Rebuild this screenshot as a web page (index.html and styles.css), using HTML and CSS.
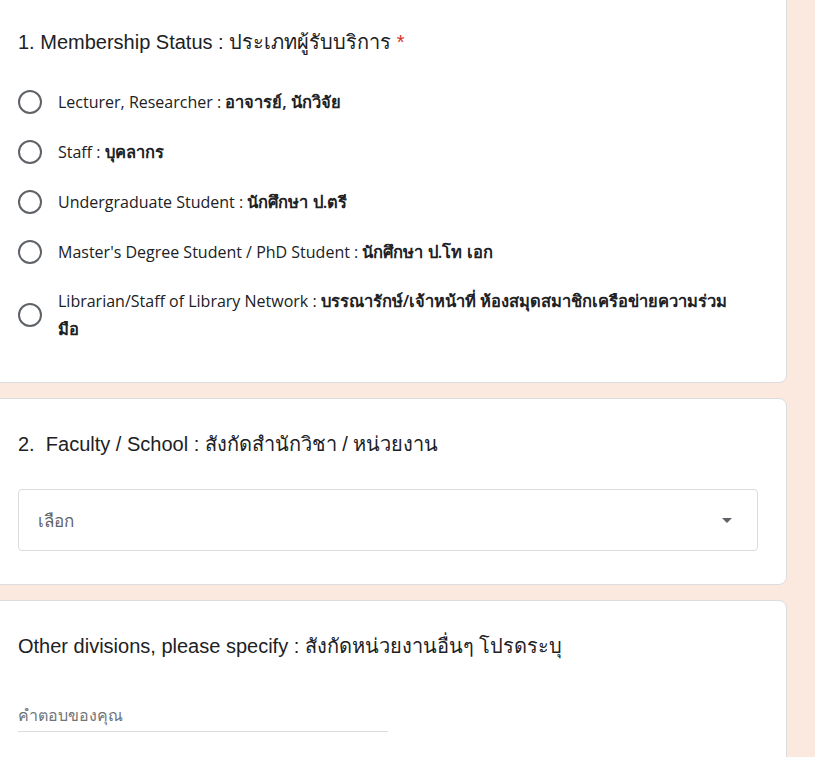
FILE: index.html
```html
<!DOCTYPE html>
<html>

<head>
  <title>แบบฟอร์มผู้รับบริการ</title>
  <meta name="viewport" content="width=device-width,initial-scale=1">
  <link rel="stylesheet" href="styles.css">
</head>

<body>
  <main class="form">
    <section class="card card--first">
      <h2 class="question">1. Membership Status : ประเภทผู้รับบริการ <span class="required">*</span></h2>
      <div class="options">
        <label class="option"><span class="radio"></span><span class="option__text">Lecturer, Researcher : <b>อาจารย์, นักวิจัย</b></span></label>
        <label class="option"><span class="radio"></span><span class="option__text">Staff : <b>บุคลากร</b></span></label>
        <label class="option"><span class="radio"></span><span class="option__text">Undergraduate Student : <b>นักศึกษา ป.ตรี</b></span></label>
        <label class="option"><span class="radio"></span><span class="option__text">Master's Degree Student / PhD Student : <b>นักศึกษา ป.โท เอก</b></span></label>
        <label class="option option--long"><span class="radio"></span><span class="option__text">Librarian/Staff of Library Network : <b>บรรณารักษ์/เจ้าหน้าที่ ห้องสมุดสมาชิกเครือข่ายความร่วม มือ</b></span></label>
      </div>
    </section>

    <section class="card">
      <h2 class="question">2.&nbsp; Faculty / School : สังกัดสำนักวิชา / หน่วยงาน</h2>
      <div class="select">
        <span class="select__text">เลือก</span>
        <svg class="select__arrow" width="10" height="5" viewBox="0 0 10 5"><path d="M0 0h10L5 5z" fill="#5f6368"/></svg>
      </div>
    </section>

    <section class="card">
      <h2 class="question">Other divisions, please specify : สังกัดหน่วยงานอื่นๆ โปรดระบุ</h2>
      <div class="answer">คำตอบของคุณ</div>
    </section>
  </main>
</body>

</html>
```

FILE: styles.css
```css
body {
  margin: 0;
  background: #fbe9df;
  font-family: 'Liberation Sans', Arial, sans-serif;
  color: #202124;
  overflow: hidden;
}

.form {
  width: 801px;
  margin-left: -14px;
  margin-top: -20px;
}

.card {
  background: #fff;
  border: 1px solid #dadce0;
  border-radius: 8px;
  padding: 32px 28px 33px 31px;
  margin-bottom: 15px;
}

.card--first {
  padding-top: 48px;
  padding-bottom: 39px;
}

.question {
  font-size: 20px;
  font-weight: normal;
  margin: 0;
  line-height: 1.3;
}

.required {
  color: #d93025;
}

.options {
  margin-top: 22px;
}

.option {
  display: flex;
  align-items: center;
  min-height: 50px;
  font-family: 'Open Sans', 'Noto Sans', sans-serif;
  font-size: 16px;
  color: #202124;
}

.option b {
  font-weight: 600;
  font-size: 16.5px;
}

.option__text {
  line-height: 27px;
  padding-right: 20px;
}

.radio {
  flex: none;
  width: 20px;
  height: 20px;
  border: 2px solid #5f6368;
  border-radius: 50%;
  margin-right: 16px;
}

.option--long {
  margin-top: 10px;
}

.select {
  margin-top: 32px;
  height: 60px;
  border: 1px solid #dadce0;
  border-radius: 4px;
  display: flex;
  align-items: center;
  justify-content: space-between;
  padding: 0 25px 0 19px;
  color: #5f6368;
  font-size: 17px;
}

.answer {
  margin-top: 44px;
  width: 370px;
  padding-bottom: 3px;
  border-bottom: 1px solid #dadce0;
  color: #70757a;
  font-size: 16px;
}
```
